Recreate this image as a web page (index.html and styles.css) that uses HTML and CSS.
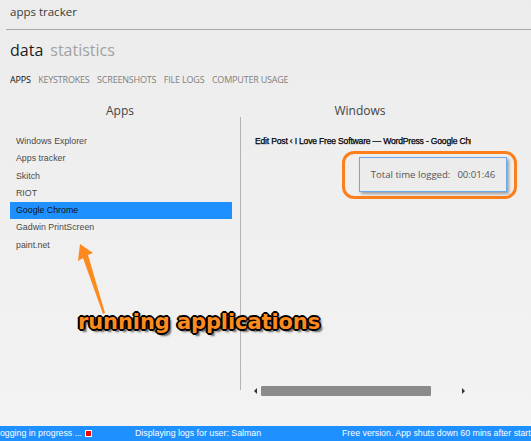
FILE: index.html
```html
<!DOCTYPE html>
<html lang="en">

<head>
    <meta charset="utf-8">
    <title>apps tracker</title>
    <link rel="stylesheet" href="styles.css">
</head>

<body>

    <header class="topbar">
        <h1 class="app-title">apps tracker</h1>
    </header>

    <nav class="pivot">
        <span class="pivot-item valgt">data</span>
        <span class="pivot-item">statistics</span>
    </nav>

    <nav class="tabs">
        <span class="tab valgt">APPS</span>
        <span class="tab">KEYSTROKES</span>
        <span class="tab">SCREENSHOTS</span>
        <span class="tab">FILE LOGS</span>
        <span class="tab">COMPUTER USAGE</span>
    </nav>

    <main class="panes">
        <section class="pane pane-apps">
            <h2 class="pane-head">Apps</h2>
            <ul class="liste">
                <li>Windows Explorer</li>
                <li>Apps tracker</li>
                <li>Skitch</li>
                <li>RIOT</li>
                <li class="valgt">Google Chrome</li>
                <li>Gadwin PrintScreen</li>
                <li>paint.net</li>
            </ul>
        </section>

        <section class="pane pane-windows">
            <h2 class="pane-head">Windows</h2>
            <ul class="liste vinduer">
                <li>Edit Post ‹ I Love Free Software — WordPress - Google Chrome</li>
            </ul>
            <div class="scrollbar">
                <span class="pil pil-venstre"></span>
                <span class="thumb"></span>
                <span class="pil pil-hoejre"></span>
            </div>
        </section>

        <!-- tooltip over the windows list -->
        <div class="tid">
            <span>Total time logged:</span>
            <span>00:01:46</span>
        </div>

        <!-- annotations -->
        <div class="ring"></div>
        <svg class="pil-note" width="40" height="80" viewBox="0 0 40 80">
            <polygon points="8,2 21,11 16,13 33,71 31,72 11,16 6,19" fill="#fd8a1e" />
        </svg>
        <p class="note">running applications</p>
    </main>

    <footer class="statusbar">
        <span class="status-log">Logging in progress ... <i class="rec"></i></span>
        <span class="status-user">Displaying logs for user: Salman</span>
        <span class="status-free">Free version. App shuts down 60 mins after start</span>
    </footer>

</body>

</html>
```

FILE: styles.css
```css
html,
body {
    margin: 0;
    padding: 0;
    height: 100%;
    overflow: hidden;
}

body {
    display: flex;
    flex-direction: column;
    background: linear-gradient(#ececec, #f3f3f3);
    font-family: "Open Sans", "Noto Sans", sans-serif;
    color: #333;
}

.topbar {
    margin-left: 6px;
    height: 29px;
    border-bottom: 1px solid #a9a9a9;
}

.app-title {
    margin: 0;
    padding: 4px 0 0 4px;
    font-size: 11.5px;
    font-weight: normal;
    color: #3a3a3a;
}

.pivot {
    padding: 9px 10px 0;
    height: 34px;
    display: flex;
    gap: 7px;
    font-size: 16px;
}

.pivot-item {
    color: #a2a2a2;
}

.pivot-item.valgt {
    color: #1e1e1e;
}

.tabs {
    padding: 0 10px;
    height: 29px;
    display: flex;
    gap: 7.5px;
    font-size: 9px;
    letter-spacing: -0.2px;
}

.tab {
    color: #808080;
}

.tab.valgt {
    color: #111;
}

.panes {
    flex: 1;
    position: relative;
    display: grid;
    grid-template-columns: 240px 240px;
    align-content: start;
}

.pane {
    height: 283px;
}

.pane-windows {
    border-left: 1px solid #b3b3b3;
    margin-top: 15px;
    height: 273px;
    position: relative;
}

.pane-head {
    margin: 0;
    height: 23px;
    text-align: center;
    font-size: 12px;
    font-weight: normal;
    color: #444;
}

.pane-windows .pane-head {
    margin-top: -15px;
    margin-left: -1px;
}

.liste {
    list-style: none;
    margin: 8px 8px 0 10px;
    padding: 0;
    font-family: "Liberation Sans", Arial, sans-serif;
    font-size: 8.8px;
    color: #4a4a4a;
}

.liste li {
    height: 17.3px;
    line-height: 17.3px;
    padding-left: 6px;
    white-space: nowrap;
}

.liste li.valgt {
    background-color: #1e90ff;
    color: #111;
}

.vinduer {
    margin: 8px 9px 0 8px;
    overflow: hidden;
}

.vinduer li {
    color: #000;
    font-size: 8.6px;
    letter-spacing: -0.2px;
    -webkit-text-stroke: 0.25px #000;
    padding-left: 6px;
    overflow: hidden;
}

.scrollbar {
    position: absolute;
    left: 13px;
    right: 14px;
    bottom: -6px;
    height: 10px;
    display: flex;
    align-items: center;
}

.thumb {
    width: 170px;
    height: 10px;
    margin-left: 4px;
    background-color: #8a8a8a;
    border-radius: 1px;
}

.pil {
    width: 0;
    height: 0;
    border-top: 3px solid transparent;
    border-bottom: 3px solid transparent;
}

.pil-venstre {
    border-right: 3px solid #333;
}

.pil-hoejre {
    margin-left: auto;
    margin-right: 1px;
    border-left: 3px solid #333;
}

.tid {
    position: absolute;
    left: 359px;
    top: 55px;
    width: 146px;
    height: 33px;
    display: flex;
    align-items: center;
    justify-content: center;
    gap: 7px;
    background-color: #ececec;
    border: 1px solid #6aa8ea;
    box-shadow: 2px 2px 3px rgba(0, 0, 0, 0.35);
    font-size: 9.6px;
    color: #555;
}

.ring {
    position: absolute;
    left: 342px;
    top: 49px;
    width: 169px;
    height: 42px;
    border: 3px solid #fd7f1a;
    border-radius: 12px;
}

.pil-note {
    position: absolute;
    left: 72px;
    top: 140px;
}

.note {
    position: absolute;
    left: 78px;
    top: 208px;
    margin: 0;
    font-family: "DejaVu Sans", sans-serif;
    font-weight: bold;
    font-size: 21px;
    letter-spacing: -0.1px;
    color: #fd8a1e;
    text-shadow:
        -1px -1px 0 #000, 1px -1px 0 #000, -1px 1px 0 #000, 1px 1px 0 #000,
        0 -2px 0 #000, 0 2px 0 #000, -2px 0 0 #000, 2px 0 0 #000,
        3px 3px 2px rgba(0, 0, 0, 0.6);
}

.statusbar {
    height: 15px;
    background-color: #1e90ff;
    color: #fff;
    font-family: "Liberation Sans", Arial, sans-serif;
    font-size: 8.8px;
    line-height: 15px;
    display: flex;
    white-space: nowrap;
    overflow: hidden;
}

.status-log {
    margin-left: -5px;
    width: 140px;
    display: flex;
    align-items: center;
    gap: 3px;
}

.rec {
    width: 7px;
    height: 7px;
    background-color: #f00;
    border: 1px solid #fff;
    box-sizing: border-box;
}

.status-user {
    width: 207px;
}
```
